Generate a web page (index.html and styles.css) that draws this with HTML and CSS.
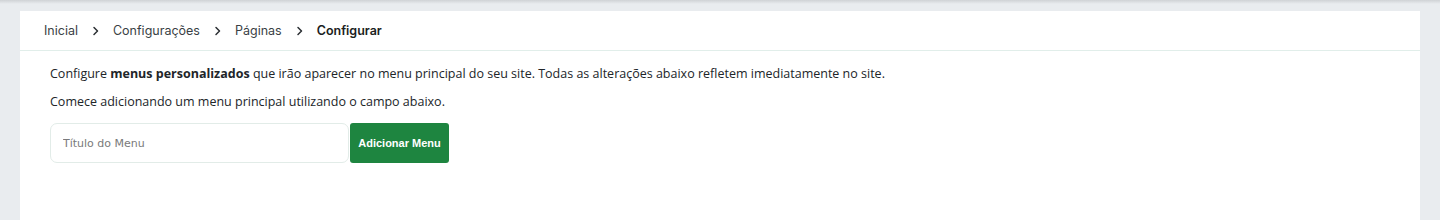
FILE: index.html
```html
<!DOCTYPE html>
<html lang="pt">
<head>
<meta charset="utf-8">
<title>Configurar</title>
<link rel="stylesheet" href="styles.css">
</head>
<body>
<div class="topshade"></div>
<div class="page">
  <div class="card">
    <nav class="crumbs">
      <span class="crumb">Inicial</span>
      <svg class="sep" width="8" height="10" viewBox="0 0 8 10"><path d="M2 1.5 L5.5 5 L2 8.5" fill="none" stroke="#2b2f33" stroke-width="1.5" stroke-linecap="round" stroke-linejoin="round"/></svg>
      <span class="crumb">Configurações</span>
      <svg class="sep" width="8" height="10" viewBox="0 0 8 10"><path d="M2 1.5 L5.5 5 L2 8.5" fill="none" stroke="#2b2f33" stroke-width="1.5" stroke-linecap="round" stroke-linejoin="round"/></svg>
      <span class="crumb">Páginas</span>
      <svg class="sep" width="8" height="10" viewBox="0 0 8 10"><path d="M2 1.5 L5.5 5 L2 8.5" fill="none" stroke="#2b2f33" stroke-width="1.5" stroke-linecap="round" stroke-linejoin="round"/></svg>
      <span class="crumb current">Configurar</span>
    </nav>
    <div class="content">
      <p class="text">Configure <strong>menus personalizados</strong> que irão aparecer no menu principal do seu site. Todas as alterações abaixo refletem imediatamente no site.</p>
      <p class="text">Comece adicionando um menu principal utilizando o campo abaixo.</p>
      <form class="addform">
        <input class="field" type="text" placeholder="Título do Menu">
        <button class="btn" type="button">Adicionar Menu</button>
      </form>
    </div>
  </div>
</div>
</body>
</html>
```
FILE: styles.css
```css
html, body {
  margin: 0;
  padding: 0;
  height: 100%;
  background: #e9ecef;
  overflow: hidden;
}
.topshade {
  height: 4px;
  background: linear-gradient(#cfd2d5, #e9ecef);
}
.page {
  padding: 7px 20px 0 20px;
}
.card {
  background: #ffffff;
  height: calc(100vh - 11px);
}
.crumbs {
  display: flex;
  align-items: center;
  height: 39px;
  padding-left: 24px;
  border-bottom: 1px solid #e1eeea;
  font-family: Inter, "Liberation Sans", sans-serif;
  font-size: 12.5px;
  color: #3a3f45;
}
.sep {
  display: block;
  margin: 0 13px 0 14px;
}
.crumb.current {
  font-weight: 600;
  color: #1b1e21;
}
.content {
  padding: 13px 30px 0 30px;
}
.text {
  margin: 0 0 8px 0;
  font-family: "Open Sans", "Noto Sans", sans-serif;
  font-size: 12.5px;
  line-height: 20px;
  color: #212529;
}
.text strong {
  font-weight: 700;
}
.addform {
  display: flex;
  margin-top: 11px;
}
.field {
  width: 299px;
  height: 40px;
  box-sizing: border-box;
  border: 1px solid #e2ece8;
  border-radius: 7px;
  padding: 0 12px;
  font-family: "DejaVu Sans", sans-serif;
  font-size: 11px;
  color: #333;
  outline: none;
}
.field::placeholder {
  color: #7a7a7a;
}
.btn {
  margin-left: 1px;
  width: 99px;
  height: 40px;
  border: none;
  border-radius: 3px;
  background: #1e8540;
  color: #ffffff;
  font-family: "Liberation Sans", Arial, sans-serif;
  font-weight: 700;
  font-size: 11px;
  padding: 0;
}
```
